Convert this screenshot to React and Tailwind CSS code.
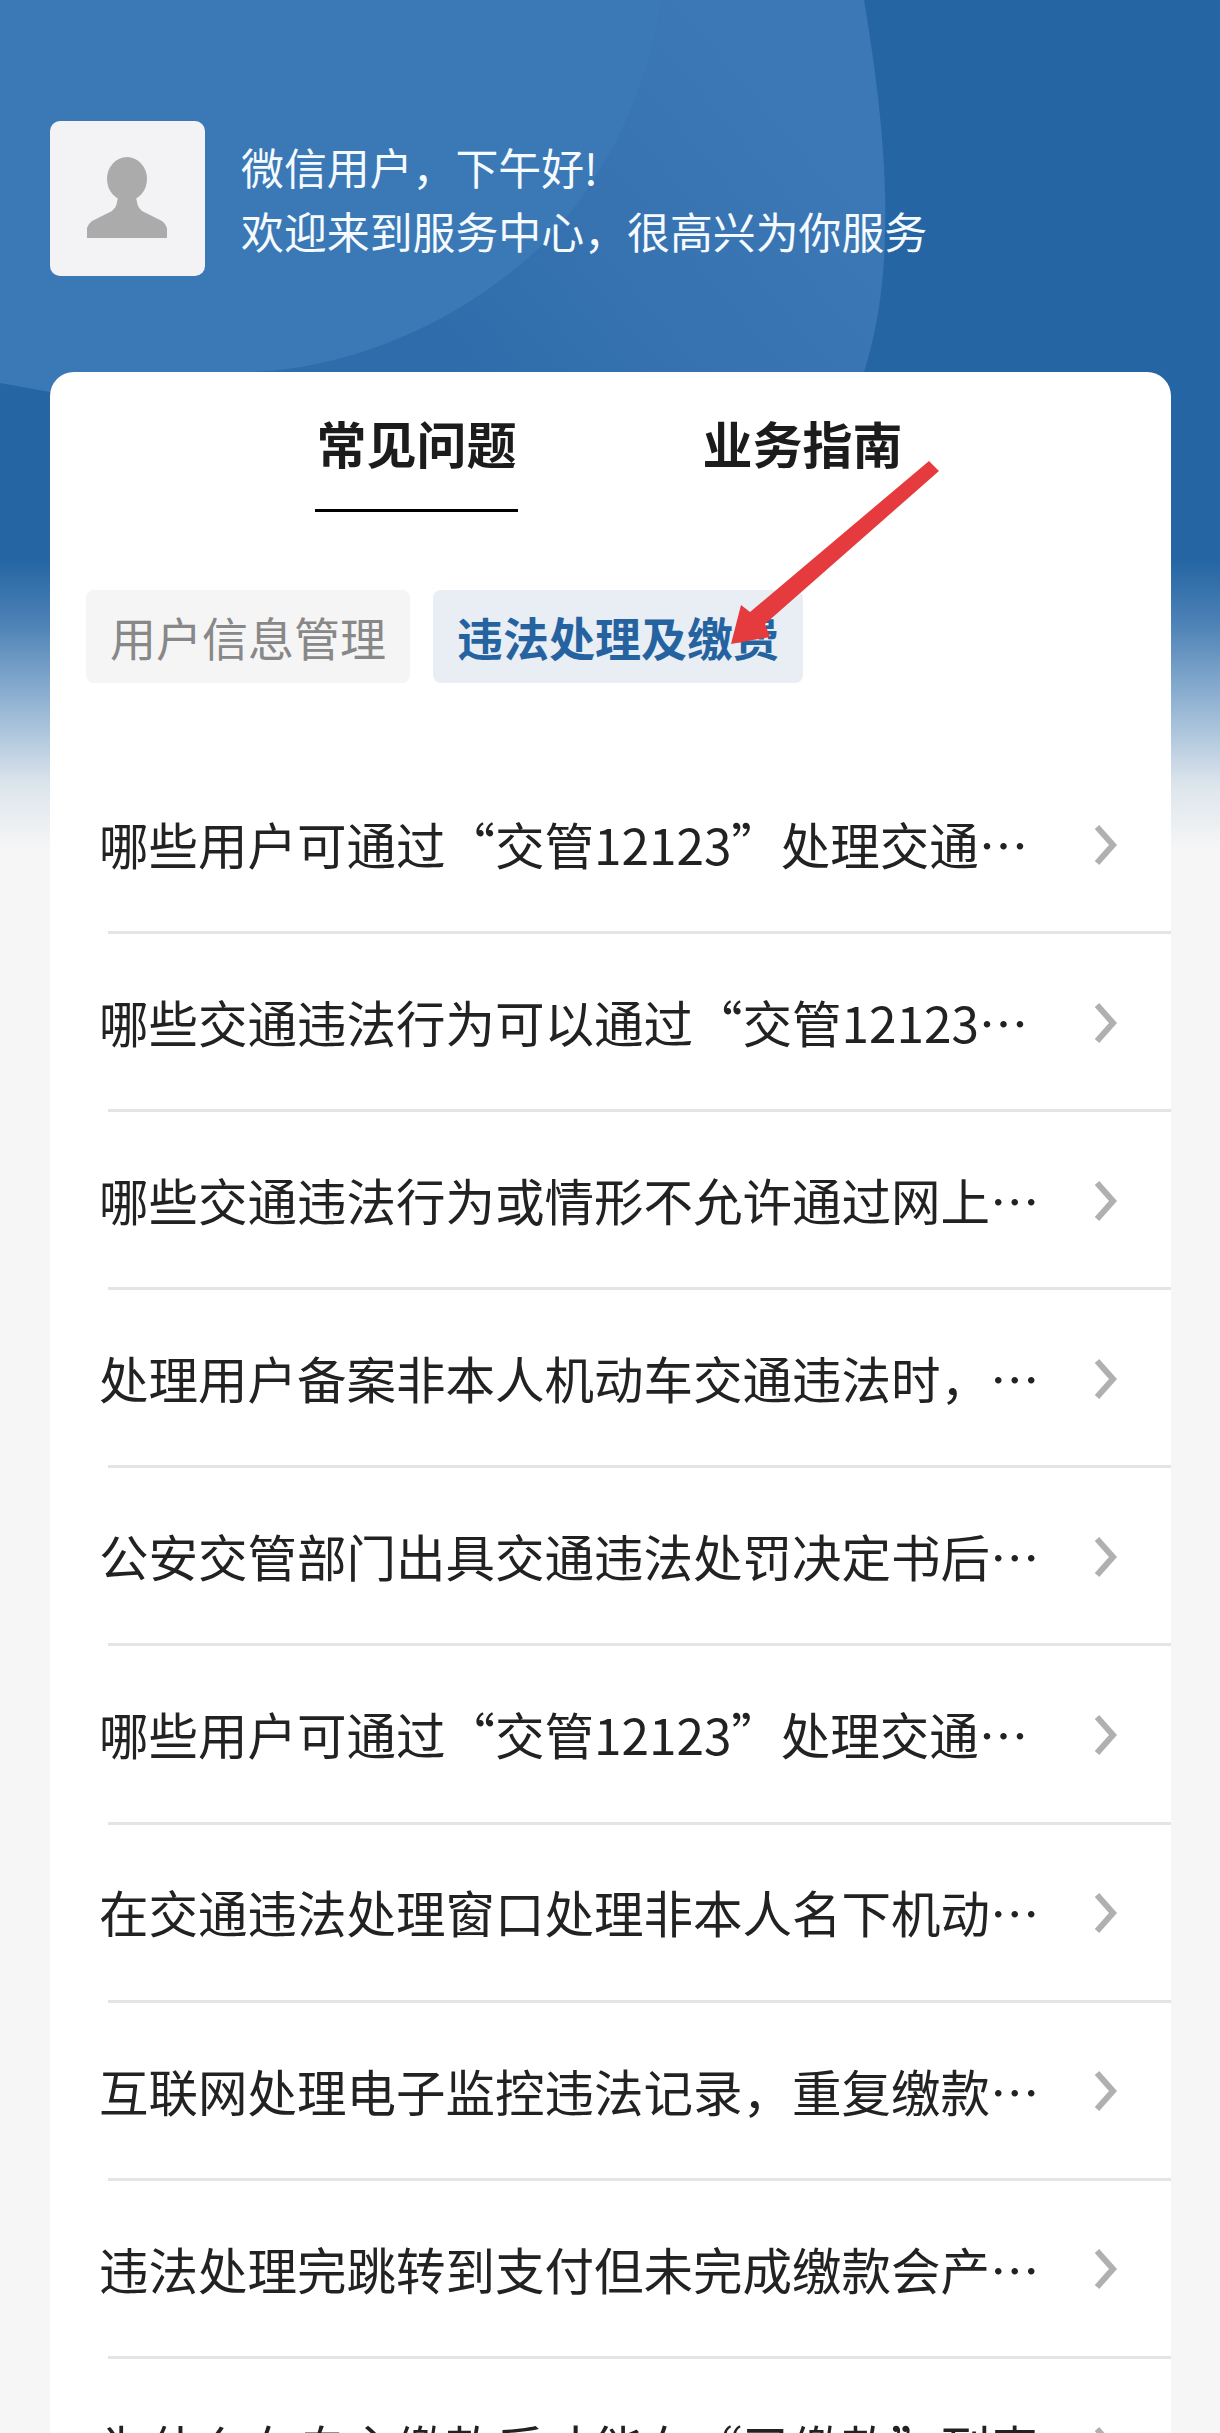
import React from "react";

const questions = [
  "哪些用户可通过“交管12123”处理交通…",
  "哪些交通违法行为可以通过“交管12123…",
  "哪些交通违法行为或情形不允许通过网上…",
  "处理用户备案非本人机动车交通违法时，…",
  "公安交管部门出具交通违法处罚决定书后…",
  "哪些用户可通过“交管12123”处理交通…",
  "在交通违法处理窗口处理非本人名下机动…",
  "互联网处理电子监控违法记录，重复缴款…",
  "违法处理完跳转到支付但未完成缴款会产…",
  "为什么在自主缴款后才能在“已缴款”列表…",
];

// 头部背景的两层弧形
const HeaderShapes = () => (
  <svg className="absolute left-0 top-0" width="1220" height="520" viewBox="0 0 1220 520">
    <defs>
      <linearGradient id="arc" gradientUnits="userSpaceOnUse" x1="430" y1="340" x2="760" y2="60">
        <stop offset="0" stopColor="#2e6cab" />
        <stop offset="0.5" stopColor="#3773b0" />
        <stop offset="1" stopColor="#3b78b5" />
      </linearGradient>
    </defs>
    <path d="M0 0 L864 0 C884 120 900 260 864 372 C800 500 300 470 50 392 L0 383 Z" fill="url(#arc)" />
    <path d="M0 0 L661 0 C650 90 600 190 537 250 C450 330 340 370 249 372 C180 400 100 400 50 392 L0 383 Z" fill="#3b78b6" />
  </svg>
);

const Avatar = () => (
  <div className="flex h-[155px] w-[155px] shrink-0 items-center justify-center rounded-[10px] bg-[#f3f3f5]">
    <svg width="155" height="155" viewBox="0 0 155 155">
      <ellipse cx="77" cy="58" rx="20" ry="22" fill="#ababab" />
      <path
        d="M37 117 L37 107 Q38 103 42 100 L62 90 Q68 86 68 72 L86 72 Q86 86 92 90 L112 100 Q116 103 117 107 L117 117 Z"
        fill="#ababab"
      />
    </svg>
  </div>
);

const Chevron = () => (
  <svg className="ml-auto mr-[53px] mt-[2px] shrink-0" width="24" height="42" viewBox="0 0 24 42">
    <path d="M3 3 L19 21 L3 39" fill="none" stroke="#b0b0b0" strokeWidth="6" />
  </svg>
);

export default function App() {
  return (
    <div className="relative h-[2433px] w-full overflow-hidden bg-[#f6f6f6] font-['Noto_Sans_CJK_SC','Noto_Sans',sans-serif]">
      <div className="absolute inset-x-0 top-0 h-[850px] bg-[linear-gradient(to_bottom,#2565a4_0px,#2565a4_560px,#4a80b5_620px,#a0bdd8_718px,#dde5ec_785px,#f6f6f6_850px)]"></div>
      <HeaderShapes />

      <div className="relative pl-[50px] pr-[49px] pt-[121px]">
        <div className="flex items-center gap-[36px]">
          <Avatar />
          <div className="pb-[2px] text-[42.9px] leading-[64px] text-[#f4fafd]">
            <div>微信用户，下午好!</div>
            <div>欢迎来到服务中心，很高兴为你服务</div>
          </div>
        </div>

        <div className="mt-[96px] rounded-t-[24px] bg-white pt-[37px]">
          <div className="flex justify-center gap-[183px] text-[50px] font-bold leading-[66px] text-[#1c1c1c]">
            <div className="-ml-[2px] border-b-[3px] border-black px-[1.5px] pb-[34px]">常见问题</div>
            <div className="border-b-[3px] border-transparent px-[1.5px] pb-[34px]">业务指南</div>
          </div>

          <div className="ml-[36px] mt-[78px] flex gap-[23px] text-[46px] leading-[93px]">
            <div className="rounded-lg bg-[#f5f5f5] px-[24px] text-[#888888]">用户信息管理</div>
            <div className="rounded-lg bg-[#e8eef4] px-[24px] font-bold text-[#2563a0]">违法处理及缴费</div>
          </div>

          <ul className="mt-[73px]">
            {questions.map((q, i) => (
              <li
                key={i}
                className="ml-[58px] flex h-[178.1px] items-center border-b-[3px] border-[#e4e4e4] text-[49.5px] text-[#222222]"
              >
                <span className="-ml-[9px] whitespace-nowrap pt-[1px]">{q}</span>
                <Chevron />
              </li>
            ))}
          </ul>
        </div>
      </div>

      {/* 截图上的红色标注箭头 */}
      <svg className="absolute left-[725px] top-[455px]" width="220" height="195" viewBox="0 0 220 195">
        <polygon
          points="204,6 214,16 40,169 45,182 6,189 16,150 25,157"
          fill="#e53b3e"
        />
      </svg>
    </div>
  );
}
